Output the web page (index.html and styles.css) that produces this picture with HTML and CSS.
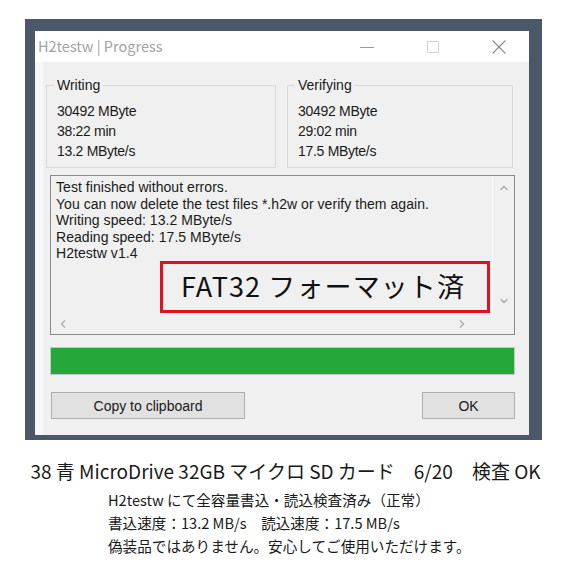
FILE: index.html
```html
<!DOCTYPE html>
<html lang="ja">
<head>
<meta charset="utf-8">
<link rel="stylesheet" href="styles.css">
</head>
<body>
<div class="frame">
  <div class="window">
    <div class="titlebar">
      <span class="title">H2testw | Progress</span>
      <div class="controls">
        <svg class="ctl" width="46" height="20" viewBox="0 0 46 20"><line x1="16" y1="10.5" x2="30" y2="10.5" stroke="#9a9a9a" stroke-width="1"/></svg>
        <svg class="ctl" width="46" height="20" viewBox="0 0 46 20"><rect x="17.5" y="4.5" width="11" height="11" fill="none" stroke="#d4d4d4" stroke-width="1"/></svg>
        <svg class="ctl" width="46" height="20" viewBox="0 0 46 20"><path d="M16.5 3.5 L29.5 16.5 M29.5 3.5 L16.5 16.5" stroke="#8a8a8a" stroke-width="1.1" fill="none"/></svg>
      </div>
    </div>
    <div class="client">
      <div class="groups">
        <fieldset class="group g-write">
          <legend>Writing</legend>
          <div class="val">30492 MByte</div>
          <div class="val">38:22 min</div>
          <div class="val">13.2 MByte/s</div>
        </fieldset>
        <fieldset class="group g-verify">
          <legend>Verifying</legend>
          <div class="val">30492 MByte</div>
          <div class="val">29:02 min</div>
          <div class="val">17.5 MByte/s</div>
        </fieldset>
      </div>
      <div class="log">
        <div class="log-main">
          <div class="log-text">
            <div>Test finished without errors.</div>
            <div>You can now delete the test files *.h2w or verify them again.</div>
            <div>Writing speed: 13.2 MByte/s</div>
            <div>Reading speed: 17.5 MByte/s</div>
            <div>H2testw v1.4</div>
          </div>
          <div class="vscroll">
            <svg width="10" height="8" viewBox="0 0 10 8"><path d="M1.5 6 L5 2.5 L8.5 6" stroke="#ababab" stroke-width="1.3" fill="none"/></svg>
            <svg width="10" height="8" viewBox="0 0 10 8"><path d="M1.5 2 L5 5.5 L8.5 2" stroke="#ababab" stroke-width="1.3" fill="none"/></svg>
          </div>
        </div>
        <div class="hscroll">
          <svg width="8" height="10" viewBox="0 0 8 10"><path d="M6 1.5 L2.5 5 L6 8.5" stroke="#ababab" stroke-width="1.3" fill="none"/></svg>
          <svg width="8" height="10" viewBox="0 0 8 10"><path d="M2 1.5 L5.5 5 L2 8.5" stroke="#ababab" stroke-width="1.3" fill="none"/></svg>
        </div>
        <div class="stamp">FAT32 フォーマット済</div>
      </div>
      <div class="progress"><div class="bar" style="width:100%"></div></div>
      <div class="buttons">
        <div class="btn btn-copy">Copy to clipboard</div>
        <div class="btn btn-ok">OK</div>
      </div>
    </div>
  </div>
</div>
<div class="caption">38 青 MicroDrive 32GB マイクロ SD カード　6/20　検査 OK</div>
<div class="notes">
  <div>H2testw にて全容量書込・読込検査済み（正常）</div>
  <div>書込速度：13.2 MB/s　読込速度：17.5 MB/s</div>
  <div>偽装品ではありません。安心してご使用いただけます。</div>
</div>
</body>
</html>
```
FILE: styles.css
```css
* { box-sizing: border-box; }
html, body { margin: 0; padding: 0; background: #ffffff; }
body { width: 567px; height: 567px; overflow: hidden; font-family: "Noto Sans CJK JP", "Noto Sans", sans-serif; }

.frame {
  margin: 19px 0 0 25px;
  width: 517px;
  height: 421px;
  background: #4b586a;
  padding: 12px 13px 5px 10px;
}
.window {
  width: 494px;
  height: 404px;
  background: #f0f0f0;
  display: flex;
  flex-direction: column;
}
.titlebar {
  height: 31px;
  background: #ffffff;
  display: flex;
  align-items: center;
  justify-content: space-between;
  padding-bottom: 3px;
}
.title {
  margin-left: 3px;
  font-family: "Noto Sans CJK JP", sans-serif;
  font-size: 14.5px;
  color: #a3a3a3;
}
.controls { display: flex; margin-right: 7px; padding-top: 3px; }
.ctl { display: block; margin-left: 20px; }

.client {
  flex: 1;
  background: #f0f0f0;
  border-left: 8px solid #f7f7f7;
  padding: 14px 0 0 3px;
  font-family: "Liberation Sans", sans-serif;
  color: #1a1a1a;
}
.groups { display: flex; gap: 11px; }
.group {
  margin: 0;
  border: 1px solid #d9d9d9;
  padding: 7px 0 0 10px;
  min-width: 0;
  height: 92px;
}
.g-write { width: 230px; }
.g-verify { width: 226px; }
.group legend {
  padding: 0 3px;
  margin-left: -3px;
  font-size: 14px;
  line-height: 18px;
}
.val { font-size: 14px; line-height: 20px; letter-spacing: -0.3px; }

.log {
  position: relative;
  margin: 7px 0 0 4px;
  width: 465px;
  height: 160px;
  border: 1px solid #8a8a8a;
  background: #f0f0f0;
  display: flex;
  flex-direction: column;
}
.log-main { flex: 1; display: flex; }
.log-text {
  flex: 1;
  padding: 3px 0 0 5px;
  font-size: 14px;
  line-height: 16.6px;
  letter-spacing: 0.05px;
  white-space: nowrap;
}
.vscroll {
  width: 22px;
  border-left: 1px solid #f8f8f8;
  display: flex;
  flex-direction: column;
  justify-content: space-between;
  align-items: center;
  padding: 8px 0 12px 0;
}
.vscroll svg, .hscroll svg { display: block; }
.hscroll {
  height: 17px;
  margin-right: 22px;
  display: flex;
  justify-content: space-between;
  align-items: center;
  padding: 0 26px 4px 8px;
}
.stamp {
  position: absolute;
  left: 109px;
  top: 85px;
  width: 330px;
  height: 52px;
  border: 3px solid #e0101c;
  font-family: "Noto Sans CJK JP", sans-serif;
  font-size: 27px;
  line-height: 43px;
  padding-left: 18px;
  color: #111;
  letter-spacing: 1.1px;
  white-space: nowrap;
}

.progress {
  margin: 12px 0 0 4px;
  width: 465px;
  height: 28px;
  border: 1px solid #c8c8c8;
  background: #e6e6e6;
}
.bar { height: 100%; background: #24a83a; }

.buttons {
  display: flex;
  justify-content: space-between;
  margin: 17px 0 0 5px;
  width: 464px;
}
.btn {
  height: 27px;
  background: #e1e1e1;
  border: 1px solid #adadad;
  display: flex;
  align-items: center;
  justify-content: center;
  font-size: 14px;
  color: #1a1a1a;
}
.btn-copy { width: 194px; }
.btn-ok { width: 93px; }

.caption {
  margin-top: 18px;
  text-align: center;
  font-size: 19px;
  line-height: 26px;
  color: #1a1a1a;
  padding-left: 4px;
}
.notes {
  margin: 5px 0 0 108px;
  font-size: 14.6px;
  line-height: 22.8px;
  color: #1a1a1a;
}
```
